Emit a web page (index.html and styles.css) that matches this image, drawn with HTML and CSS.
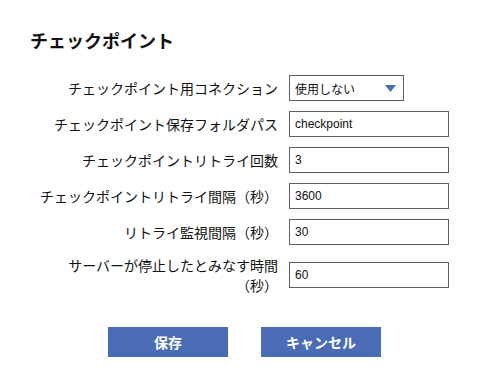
FILE: index.html
```html
<!DOCTYPE html>
<html lang="ja">
<head>
  <meta charset="UTF-8">
  <meta name="viewport" content="width=device-width, initial-scale=1.0">
  <title>チェックポイント</title>
  <link rel="stylesheet" href="styles.css">
</head>
<body>
  <div class="page">
    <h1 class="title">チェックポイント</h1>

    <div class="form">
      <label class="label">チェックポイント用コネクション</label>
      <div class="select">
        <span>使用しない</span>
        <svg class="arrow" width="11" height="7" viewBox="0 0 11 7"><path d="M0 0H11L5.5 7Z" fill="#4a6cb5"/></svg>
      </div>

      <label class="label">チェックポイント保存フォルダパス</label>
      <input class="field" type="text" value="checkpoint">

      <label class="label">チェックポイントリトライ回数</label>
      <input class="field" type="text" value="3">

      <label class="label">チェックポイントリトライ間隔（秒）</label>
      <input class="field" type="text" value="3600">

      <label class="label">リトライ監視間隔（秒）</label>
      <input class="field" type="text" value="30">

      <label class="label">サーバーが停止したとみなす時間（秒）</label>
      <input class="field" type="text" value="60">
    </div>

    <div class="buttons">
      <button class="btn">保存</button>
      <button class="btn">キャンセル</button>
    </div>
  </div>
</body>
</html>
```

FILE: styles.css
```css
*{
  margin:0;
  padding:0;
  box-sizing:border-box;
}
body{
  background:#fff;
  color:#111;
  font-family:"Noto Sans CJK JP","Liberation Sans",sans-serif;
}
.page{
  padding-top:28px;
}
.title{
  margin-left:30px;
  font-size:18px;
  line-height:24px;
  font-weight:bold;
}
.form{
  display:grid;
  grid-template-columns:240px 160px;
  column-gap:11px;
  row-gap:10px;
  margin:23px 0 0 38px;
  align-items:center;
}
.label{
  font-size:14px;
  line-height:20px;
  text-align:right;
}
.field,
.select{
  height:26px;
  border:1px solid #5f5f5f;
  background:#fff;
  font-family:"Liberation Sans",Arial,"Noto Sans CJK JP",sans-serif;
  font-size:12px;
  color:#111;
  padding:0 5px;
}
.field{
  width:160px;
  outline:none;
}
.select{
  width:115px;
  display:flex;
  align-items:center;
  justify-content:space-between;
  padding-right:7px;
}
.select span{
  font-family:"Noto Sans CJK JP",sans-serif;
}
.arrow{
  display:block;
}
.buttons{
  display:flex;
  justify-content:center;
  gap:33px;
  margin-top:32px;
}
.btn{
  width:120px;
  height:30px;
  border:none;
  background:#4a6cb5;
  color:#fff;
  font-family:"Noto Sans CJK JP",sans-serif;
  font-size:14px;
  font-weight:bold;
}
```
